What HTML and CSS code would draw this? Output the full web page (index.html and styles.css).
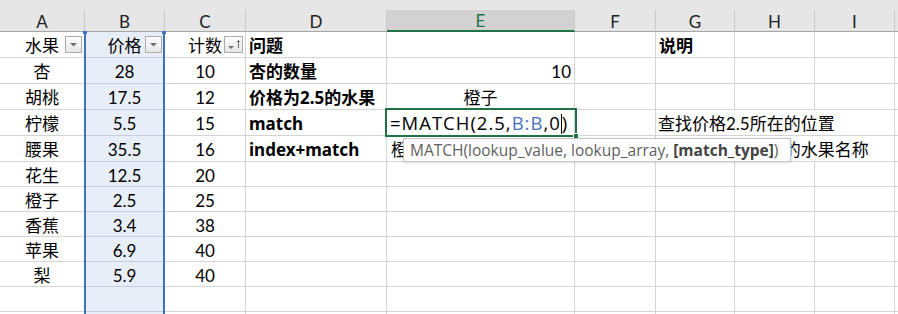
FILE: index.html
```html
<!DOCTYPE html>
<html lang="zh-CN">
<head>
    <meta charset="UTF-8">
    <title>MATCH 函数示例</title>
    <link rel="stylesheet" href="styles.css">
</head>
<body>
    <div class="sheet">
        <div class="grid cells">
            <div class="strip"></div>

            <div class="hd">A</div><div class="hd">B</div><div class="hd">C</div><div class="hd">D</div>
            <div class="hd hd-sel">E</div><div class="hd">F</div><div class="hd">G</div><div class="hd">H</div>
            <div class="hd">I</div><div class="hd hd-end"></div>

            <!-- row 1 -->
            <div class="c m">水果<span class="filter"><svg width="15" height="15" viewBox="0 0 15 15"><polygon points="4,6 11,6 7.5,9.5" fill="#707070"/></svg></span></div>
            <div class="c m b">价格<span class="filter"><svg width="15" height="15" viewBox="0 0 15 15"><polygon points="4,6 11,6 7.5,9.5" fill="#707070"/></svg></span></div>
            <div class="c m">计数<span class="filter sort"><svg width="17" height="15" viewBox="0 0 17 15"><polygon points="3,9 9,9 6,12" fill="#707070"/><path d="M13.5 3.5 V11 M11.8 5.3 L13.5 3.5 L15.2 5.3" stroke="#707070" stroke-width="1" fill="none"/></svg></span></div>
            <div class="c bold">问题</div><div class="c"></div><div class="c"></div>
            <div class="c bold">说明</div><div class="c"></div><div class="c"></div><div class="c end"></div>

            <!-- row 2 -->
            <div class="c m">杏</div><div class="c m b">28</div><div class="c m">10</div>
            <div class="c bold">杏的数量</div><div class="c r">10</div><div class="c"></div>
            <div class="c"></div><div class="c"></div><div class="c"></div><div class="c end"></div>

            <!-- row 3 -->
            <div class="c m">胡桃</div><div class="c m b">17.5</div><div class="c m">12</div>
            <div class="c bold">价格为2.5的水果</div><div class="c m">橙子</div><div class="c"></div>
            <div class="c"></div><div class="c"></div><div class="c"></div><div class="c end"></div>

            <!-- row 4 -->
            <div class="c m">柠檬</div><div class="c m b">5.5</div><div class="c m">15</div>
            <div class="c bold">match</div>
            <div class="c formula">=MATCH(2.5,<span class="ref">B:B</span>,0<span class="caret"></span>)</div>
            <div class="c"></div>
            <div class="c span3">查找价格2.5所在的位置</div><div class="c end"></div>

            <!-- row 5 -->
            <div class="c m">腰果</div><div class="c m b">35.5</div><div class="c m">16</div>
            <div class="c bold">index+match</div><div class="c">橙子</div><div class="c"></div>
            <div class="c span3">返回价格2.5对应的水果名称</div><div class="c end"></div>

            <!-- rows 6-9 -->
            <div class="c m">花生</div><div class="c m b">12.5</div><div class="c m">20</div>
            <div class="c"></div><div class="c"></div><div class="c"></div>
            <div class="c"></div><div class="c"></div><div class="c"></div><div class="c end"></div>

            <div class="c m">橙子</div><div class="c m b">2.5</div><div class="c m">25</div>
            <div class="c"></div><div class="c"></div><div class="c"></div>
            <div class="c"></div><div class="c"></div><div class="c"></div><div class="c end"></div>

            <div class="c m">香蕉</div><div class="c m b">3.4</div><div class="c m">38</div>
            <div class="c"></div><div class="c"></div><div class="c"></div>
            <div class="c"></div><div class="c"></div><div class="c"></div><div class="c end"></div>

            <div class="c m">苹果</div><div class="c m b">6.9</div><div class="c m">40</div>
            <div class="c"></div><div class="c"></div><div class="c"></div>
            <div class="c"></div><div class="c"></div><div class="c"></div><div class="c end"></div>

            <!-- row 10 -->
            <div class="c m">梨</div><div class="c m b">5.9</div><div class="c m">40</div>
            <div class="c"></div><div class="c"></div><div class="c"></div>
            <div class="c"></div><div class="c"></div><div class="c"></div><div class="c end"></div>

            <!-- rows 11-12 -->
            <div class="c"></div><div class="c b"></div><div class="c"></div>
            <div class="c"></div><div class="c"></div><div class="c"></div>
            <div class="c"></div><div class="c"></div><div class="c"></div><div class="c end"></div>

            <div class="c"></div><div class="c b"></div><div class="c"></div>
            <div class="c"></div><div class="c"></div><div class="c"></div>
            <div class="c"></div><div class="c"></div><div class="c"></div><div class="c end"></div>
        </div>

        <div class="grid marks">
            <div class="ref-box"></div>
            <div class="sel-box"><span class="handle"></span></div>
        </div>

        <div class="tip">MATCH(lookup_value, lookup_array, <b>[match_type]</b>)</div>
    </div>
</body>
</html>
```

FILE: styles.css
```css
body {
    margin: 0;
    background: #fff;
    overflow: hidden;
}
.sheet {
    position: relative;
    display: grid;
    width: 898px;
    height: 314px;
    font-family: Lato, "Noto Sans CJK SC", sans-serif;
    font-size: 17px;
    color: #000;
}
.grid {
    grid-area: 1 / 1;
    display: grid;
    grid-template-columns: 85px 80px 81px 141px 188px 81px 79px 80px 80px 1fr;
    grid-template-rows: 10px 22px repeat(5, 26px) repeat(5, 25px) 25px 1fr;
}
.marks {
    pointer-events: none;
}
.strip {
    grid-column: 1 / -1;
    background: #e6e6e6;
}
.hd {
    background: #e6e6e6;
    border-right: 1px solid #c9c9c9;
    border-bottom: 1px solid #a6a6a6;
    display: flex;
    justify-content: center;
    align-items: center;
    font-size: 17px;
    color: #222;
    line-height: 1;
    padding-top: 1px;
}
.hd-sel {
    background: #d2d2d2;
    color: #217346;
    border-bottom: 2px solid #217346;
}
.hd-end {
    border-right: 0;
}
.c {
    position: relative;
    border-right: 1px solid #d4d4d4;
    border-bottom: 1px solid #d4d4d4;
    padding: 2px 4px 0;
    display: flex;
    align-items: center;
    white-space: nowrap;
    overflow: hidden;
    line-height: 1;
}
.c.end {
    border-right: 0;
}
.m {
    justify-content: center;
}
.r {
    justify-content: flex-end;
    padding-right: 3px;
}
.bold {
    font-family: "Noto Sans", "Noto Sans CJK SC", sans-serif;
    font-weight: 700;
    padding-left: 3px;
}
.b {
    background: #e8eef8;
    border-bottom-color: #c4cedc;
}
.span3 {
    grid-column: span 3;
    padding-left: 2px;
}
.filter {
    position: absolute;
    right: 2px;
    top: 4px;
    width: 15px;
    height: 15px;
    border: 1px solid #acacac;
    background: linear-gradient(#fdfdfd, #e7e7e7);
    display: flex;
}
.filter.sort {
    width: 17px;
}
.formula {
    font-family: "Open Sans", sans-serif;
    font-size: 18.5px;
    letter-spacing: 1px;
    padding-left: 3px;
}
.formula .ref {
    color: #4472c4;
}
.caret {
    display: inline-block;
    width: 1px;
    height: 20px;
    background: #000;
}
.ref-box {
    grid-column: 2;
    grid-row: 3 / -1;
    margin-left: -1px;
    border-left: 2px solid #3f6fc6;
    border-right: 2px solid #3f6fc6;
    position: relative;
}
.ref-box::before,
.ref-box::after {
    content: "";
    position: absolute;
    top: -1px;
    width: 4px;
    height: 3px;
    background: #3f6fc6;
}
.ref-box::before { left: -3px; }
.ref-box::after { right: -3px; }
.sel-box {
    grid-column: 5;
    grid-row: 6;
    margin: -2px -2px -1px -2px;
    border: 2px solid #217346;
    position: relative;
}
.handle {
    position: absolute;
    right: -4px;
    bottom: -4px;
    width: 4px;
    height: 4px;
    background: #217346;
    border: 1px solid #fff;
}
.tip {
    position: absolute;
    left: 403px;
    top: 138px;
    width: 380px;
    height: 22px;
    padding-left: 6px;
    border: 1px solid #c3c3c3;
    background: #fff;
    box-shadow: 1px 1px 2px rgba(0, 0, 0, 0.12);
    font-family: "Open Sans", sans-serif;
    font-size: 15.5px;
    line-height: 22px;
    color: #5f5f5f;
    white-space: nowrap;
}
.tip b {
    color: #444;
}
```
